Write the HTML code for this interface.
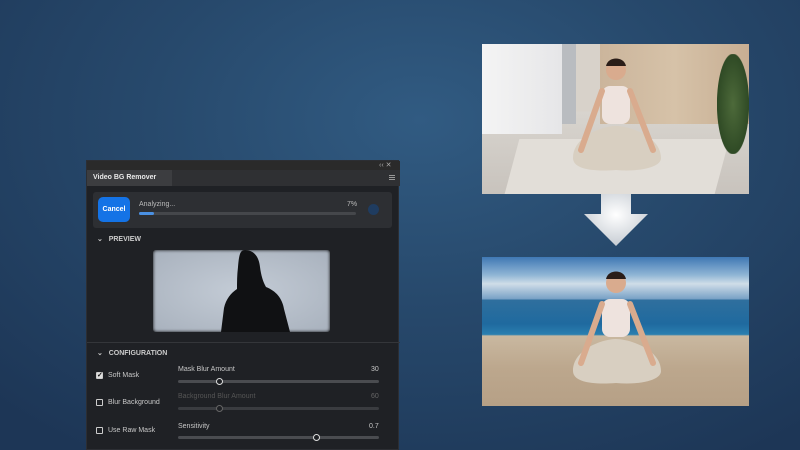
<!DOCTYPE html>
<html><head><style>
*{margin:0;padding:0;box-sizing:border-box}
body{width:800px;height:450px;overflow:hidden;position:relative;font-family:"Liberation Sans",sans-serif;
background:radial-gradient(ellipse 600px 400px at 420px 120px,#315b82 0%,#27496c 45%,#1d3656 100%);}
.a{position:absolute}
.panel{left:86px;top:160px;width:313px;height:290px;background:#1f2125;border:1px solid #2c2e33}
.t{color:#c8c8c8;font-size:7px;position:absolute}
.track{position:absolute;height:3px;background:#4a4c50;border-radius:2px;width:201px;left:91px}
.thumb{position:absolute;width:7px;height:7px;border-radius:50%;background:#1f2125;border:1.5px solid #ddd}
.cb{position:absolute;left:9px;width:7px;height:7px;border:1.2px solid #ccc;border-radius:1px}
</style></head><body>

<div class="a panel">
  <div class="a" style="left:0;top:0;width:313px;height:9px;background:#2a2a2a"></div>
  <div class="t" style="left:292px;top:0;font-size:7px;color:#aaa">‹‹ ✕</div>
  <div class="a" style="left:0;top:9px;width:313px;height:16px;background:#2f3033"></div>
  <div class="a" style="left:0;top:9px;width:85px;height:16px;background:#3c3d40"></div>
  <div class="t" style="left:6px;top:13px;font-weight:bold;color:#e8e8e8">Video BG Remover</div>
  <div class="a" style="left:302px;top:14px;width:6px;height:5px;border-top:1px solid #999;border-bottom:1px solid #999;background:linear-gradient(#999,#999) center/100% 1px no-repeat"></div>
  <div class="a" style="left:6px;top:31px;width:299px;height:36px;background:#2d2f33;border-radius:3px"></div>
  <div class="a" style="left:11px;top:36px;width:32px;height:25px;background:#1473e6;border-radius:5px;color:#fff;font-size:7px;font-weight:bold;text-align:center;line-height:25px">Cancel</div>
  <div class="t" style="left:52px;top:40px;color:#bbb">Analyzing...</div>
  <div class="t" style="left:260px;top:40px;color:#bbb">7%</div>
  <div class="a" style="left:52px;top:51px;width:217px;height:3px;background:#45474b;border-radius:2px"></div>
  <div class="a" style="left:52px;top:51px;width:15px;height:3px;background:#4a90e2;border-radius:2px"></div>
  <div class="a" style="left:281px;top:43px;width:11px;height:11px;background:#1f3c60;border-radius:50%"></div>
  <div class="t" style="left:10px;top:74px;font-weight:bold;color:#ccc">⌄&nbsp;&nbsp; PREVIEW</div>
  <div class="a" style="left:66px;top:89px;width:177px;height:82px;background:radial-gradient(ellipse at center,#c4ccd6,#a8b1bd);border-radius:3px;overflow:hidden;box-shadow:0 0 3px #000 inset">
    <svg width="177" height="82" viewBox="0 0 177 82"><path d="M92 0c9 0 14 7 15 17 1 8 3 15 6 20 10 4 16 11 18 22l6 23H68l3-24c2-9 7-15 13-19 0-7 0-14 1-22 1-12 2-17 7-17z" fill="#101113"/></svg>
  </div>
  <div class="a" style="left:0;top:181px;width:313px;height:1px;background:#34363a"></div>
  <div class="t" style="left:10px;top:188px;font-weight:bold;color:#ccc">⌄&nbsp;&nbsp; CONFIGURATION</div>

  <div class="cb" style="top:211px;background:#ddd;color:#111;font-size:7px;line-height:5px;text-align:center;font-weight:bold">✓</div>
  <div class="t" style="left:21px;top:211px">Soft Mask</div>
  <div class="t" style="left:91px;top:205px">Mask Blur Amount</div>
  <div class="t" style="left:284px;top:205px">30</div>
  <div class="track" style="top:219px"></div><div class="thumb" style="left:129px;top:217px"></div>

  <div class="cb" style="top:238px"></div>
  <div class="t" style="left:21px;top:238px">Blur Background</div>
  <div class="t" style="left:91px;top:232px;color:#555">Background Blur Amount</div>
  <div class="t" style="left:284px;top:232px;color:#666">60</div>
  <div class="track" style="top:246px;background:#3a3c40"></div><div class="thumb" style="left:129px;top:244px;border-color:#666"></div>

  <div class="cb" style="top:266px"></div>
  <div class="t" style="left:21px;top:266px">Use Raw Mask</div>
  <div class="t" style="left:91px;top:262px">Sensitivity</div>
  <div class="t" style="left:282px;top:262px">0.7</div>
  <div class="track" style="top:275px"></div><div class="thumb" style="left:226px;top:273px"></div>
</div>

<div class="a" style="left:482px;top:44px;width:267px;height:150px;overflow:hidden;background:linear-gradient(#d8d2ca 0 45%,#d8d4ce 45%,#c8c3bd 100%)">
  <div class="a" style="left:0;top:0;width:80px;height:90px;background:linear-gradient(90deg,#f4f4f4,#e6e6e8)"></div>
  <div class="a" style="left:80px;top:0;width:14px;height:80px;background:#b9bcc0"></div>
  <div class="a" style="left:118px;top:0;width:149px;height:80px;background:linear-gradient(90deg,#cbb59c,#d6c2a8,#c7ae93)"></div>
  <div class="a" style="left:30px;top:95px;width:210px;height:55px;background:#e2ded8;transform:skewX(-15deg)"></div>
  <div class="a" style="left:235px;top:10px;width:32px;height:100px;background:radial-gradient(ellipse,#4d6a3a,#2f4a25 70%,transparent 72%)"></div>
  <svg class="a" style="left:84px;top:12px" width="104" height="125" viewBox="-7 0 104 125"><circle cx="43" cy="14" r="10" fill="#d9ab8e"/><path d="M33 10c2-10 18-10 20 0" fill="#2a1d18"/><rect x="29" y="30" width="28" height="38" rx="8" fill="#eee3de"/><path d="M0 102c0-22 30-32 43-32s45 10 45 32c0 10-24 14-45 12C16 116 0 112 0 102z" fill="#d8cfc1"/><path d="M29 35 8 94M57 35 80 94" stroke="#d9ab8e" stroke-width="6" stroke-linecap="round"/></svg>
</div>

<svg class="a" style="left:584px;top:194px" width="64" height="52" viewBox="0 0 64 52"><defs><radialGradient id="g" cx="50%" cy="40%" r="60%"><stop offset="0" stop-color="#ffffff"/><stop offset="1" stop-color="#c6ccd3"/></radialGradient></defs><path d="M17 0h30v20h17L32 52 0 20h17z" fill="url(#g)"/></svg>

<div class="a" style="left:482px;top:257px;width:267px;height:149px;overflow:hidden;background:linear-gradient(#3f78b4 0,#8fb5d5 12%,#cfdde8 18%,#7aa2c6 28%,#2f6f9e 29%,#1f6a9f 45%,#2a7fb0 52%,#c9b8a0 53%,#bca78d 75%,#b6a086 100%)">
  <svg class="a" style="left:84px;top:12px" width="104" height="125" viewBox="-7 0 104 125"><circle cx="43" cy="14" r="10" fill="#d9ab8e"/><path d="M33 10c2-10 18-10 20 0" fill="#2a1d18"/><rect x="29" y="30" width="28" height="38" rx="8" fill="#eee3de"/><path d="M0 102c0-22 30-32 43-32s45 10 45 32c0 10-24 14-45 12C16 116 0 112 0 102z" fill="#d8cfc1"/><path d="M29 35 8 94M57 35 80 94" stroke="#d9ab8e" stroke-width="6" stroke-linecap="round"/></svg>
</div>
</body></html>
